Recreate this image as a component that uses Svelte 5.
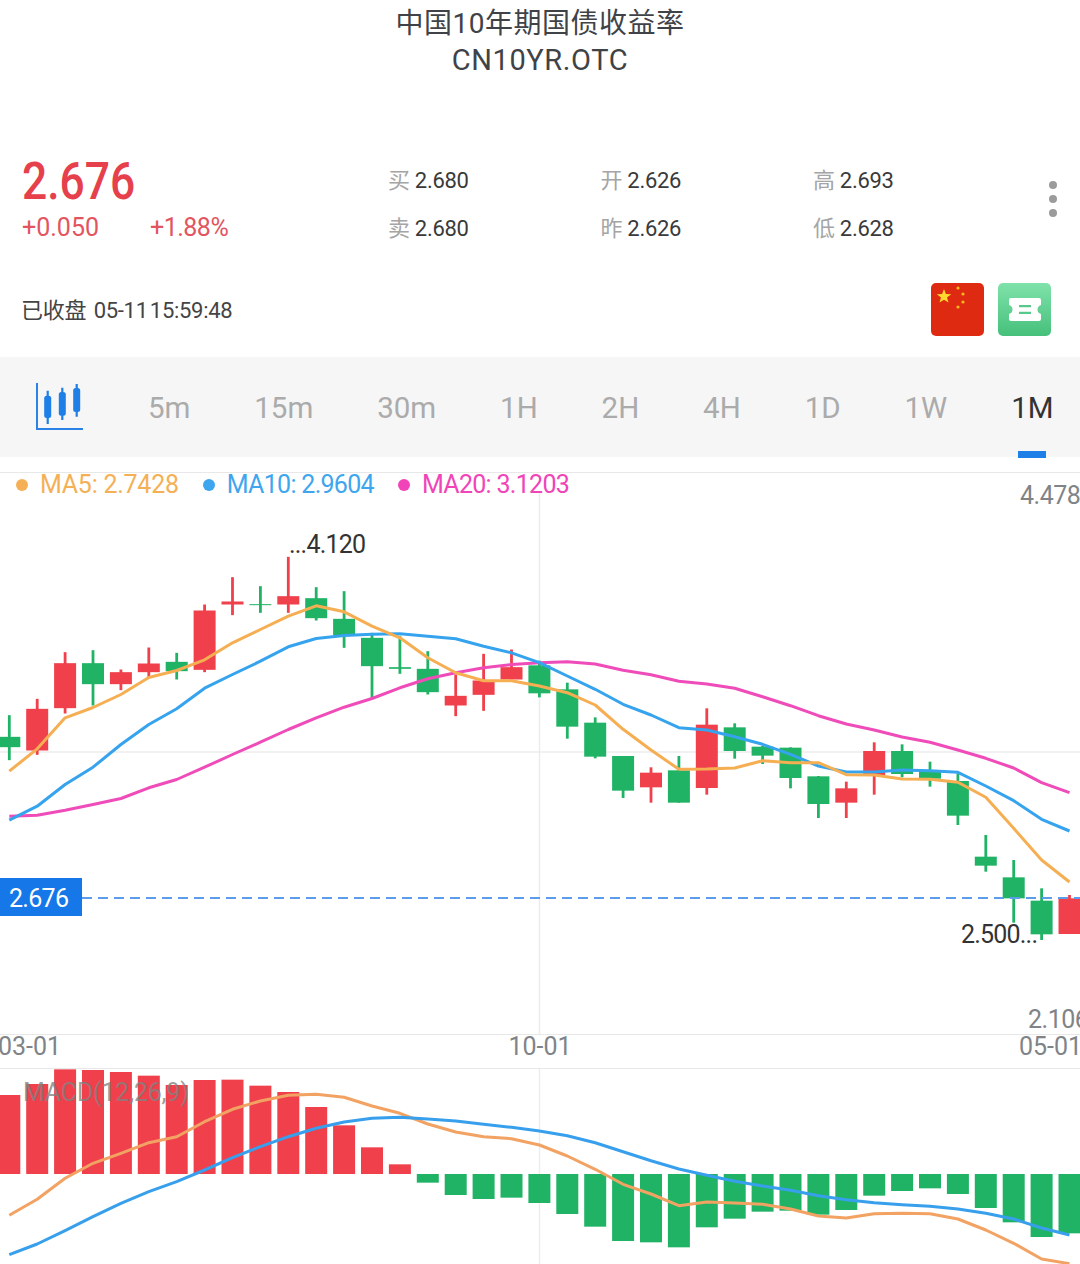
<script>
  const tabs = ['5m', '15m', '30m', '1H', '2H', '4H', '1D', '1W', '1M'];
  const active = '1M';

  const stats = [
    ['买', '2.680'], ['开', '2.626'], ['高', '2.693'],
    ['卖', '2.680'], ['昨', '2.626'], ['低', '2.628']
  ];

  const RED = '#ef404b';
  const GREEN = '#21b365';
  const step = 27.9;
  const xAt = (i) => 9.3 + step * i;

  // y values are in thirds of a pixel, measured from the top of each panel's crop
  // [wickTop, bodyTop, bodyBottom, wickBottom, isUp]
  const left = [
    [737, 802, 833, 872, 0], [688, 718, 843, 856, 1], [548, 581, 716, 732, 1], [542, 581, 644, 708, 0],
    [600, 608, 644, 662, 1], [534, 582, 608, 625, 1], [550, 577, 605, 630, 0], [405, 423, 601, 608, 1],
    [323, 396, 405, 437, 1], [350, 404, 407, 430, 0], [262, 380, 405, 430, 1], [353, 386, 446, 453, 0],
    [365, 448, 497, 535, 0], [490, 505, 590, 686, 0], [500, 593, 598, 613, 0], [545, 598, 668, 675, 0],
    [615, 679, 708, 740, 1], [553, 633, 676, 724, 1], [540, 593, 630, 630, 1]
  ];
  const right = [
    [62, 76, 160, 172, 0], [128, 148, 260, 296, 0], [232, 248, 350, 355, 0], [348, 348, 452, 474, 0],
    [382, 398, 442, 488, 1], [348, 391, 488, 488, 0], [205, 254, 444, 464, 1], [250, 262, 333, 356, 0],
    [318, 320, 347, 372, 0], [322, 323, 414, 445, 0], [408, 409, 492, 534, 0], [425, 445, 488, 534, 1],
    [307, 333, 405, 464, 1], [313, 333, 402, 412, 0], [365, 392, 416, 440, 0], [400, 423, 527, 555, 0],
    [585, 650, 677, 695, 0], [660, 712, 775, 848, 0], [745, 782, 883, 900, 0], [765, 775, 882, 882, 1]
  ];

  const toMainLeft = (v) => v / 3 - 3.5;
  const toMainRight = (v) => v / 3 + 167;

  const candles = [
    ...left.map((c) => [...c.slice(0, 4).map(toMainLeft), c[4]]),
    ...right.map((c) => [...c.slice(0, 4).map(toMainRight), c[4]])
  ].map(([wt, bt, bb, wb, up], i) => ({ x: xAt(i), wt, bt, bb, wb, color: up ? RED : GREEN }));

  function mainLine(a, b) {
    const ys = [...a.map(toMainLeft), ...b.map(toMainRight)];
    return ys.map((y, i) => `${xAt(i).toFixed(1)},${y.toFixed(1)}`).join(' ');
  }

  const ma5 = mainLine(
    [905, 838, 745, 714, 675, 624, 603, 571, 520, 480, 440, 409, 427, 470, 505, 565, 610, 634, 634],
    [138, 158, 195, 268, 330, 388, 387, 384, 362, 368, 368, 404, 405, 417, 418, 427, 472, 565, 660, 726]
  );
  const ma10 = mainLine(
    [1052, 1010, 945, 893, 825, 765, 718, 656, 615, 575, 532, 507, 498, 494, 493, 500, 508, 530, 550],
    [68, 108, 148, 193, 225, 263, 270, 290, 313, 343, 378, 396, 396, 390, 392, 397, 438, 482, 538, 573]
  );
  const ma20 = mainLine(
    [1040, 1037, 1022, 1005, 987, 955, 930, 893, 855, 818, 780, 745, 713, 687, 655, 628, 610, 595, 585],
    [68, 65, 72, 91, 104, 124, 132, 145, 170, 197, 227, 252, 270, 291, 307, 330, 355, 384, 428, 458]
  );

  // MACD panel starts at page y 1069, its crop at 1020
  const toMacd = (v) => v / 3 - 49;
  const zero = toMacd(462);

  const bars = [
    225, 192, 148, 150, 156, 167, 195, 180, 179, 197, 216, 261, 316, 382, 433, 488, 525, 537, 533, 549,
    582, 620, 663, 667, 682, 622, 596, 575, 572, 584, 570, 527, 513, 505, 522, 564, 607, 651, 640
  ].map((v, i) => {
    const y = toMacd(v);
    return {
      x: xAt(i) - 11,
      y: Math.min(y, zero),
      h: Math.abs(y - zero),
      color: y < zero ? RED : GREEN
    };
  });

  function macdLine(ys) {
    return ys.map((v, i) => `${xAt(i).toFixed(1)},${toMacd(v).toFixed(1)}`).join(' ');
  }

  const dif = macdLine([
    586, 538, 475, 430, 400, 368, 350, 305, 268, 243, 226, 223, 232, 258, 280, 312, 336, 350, 356, 375,
    408, 448, 493, 522, 557, 546, 549, 553, 567, 588, 594, 581, 580, 581, 597, 630, 670, 717, 731
  ]);
  const dea = macdLine([
    704, 672, 632, 590, 550, 515, 485, 450, 413, 380, 350, 325, 306, 295, 292, 297, 303, 313, 322, 333,
    347, 368, 395, 422, 447, 466, 484, 498, 511, 527, 539, 548, 554, 559, 567, 580, 597, 624, 645
  ]);
</script>

<div class="page">
  <header class="title">
    <div class="name">中国10年期国债收益率</div>
    <div class="code">CN10YR.OTC</div>
  </header>

  <section class="quote">
    <div class="price">
      <div class="last">2.676</div>
      <div class="change">
        <span>+0.050</span>
        <span class="pct">+1.88%</span>
      </div>
    </div>
    <div class="stats">
      {#each stats as [label, value]}
        <div class="stat"><span class="stat-label">{label}</span> {value}</div>
      {/each}
    </div>
    <div class="more" aria-hidden="true"><i></i><i></i><i></i></div>
  </section>

  <section class="status">
    <div class="status-text">已收盘 <span class="time">05-11 15:59:48</span></div>
    <svg class="badge" width="53" height="53" viewBox="0 0 53 53" aria-label="中国">
      <rect width="53" height="53" rx="5" fill="#de2a10" />
      <polygon fill="#ffd92e" points="13,6 14.9,11 20.2,11.2 16,14.5 17.5,19.6 13,16.7 8.5,19.6 10,14.5 5.8,11.2 11.1,11" />
      <circle cx="27" cy="5" r="1.6" fill="#fbb81c" />
      <circle cx="32" cy="11" r="1.6" fill="#fbb81c" />
      <circle cx="32" cy="19" r="1.6" fill="#fbb81c" />
      <circle cx="27" cy="24" r="1.6" fill="#fbb81c" />
    </svg>
    <svg class="badge" width="53" height="53" viewBox="0 0 53 53" aria-hidden="true">
      <defs>
        <linearGradient id="ticket" x1="0" y1="0" x2="0" y2="1">
          <stop offset="0" stop-color="#7fe2aa" />
          <stop offset="1" stop-color="#46c07b" />
        </linearGradient>
      </defs>
      <rect width="53" height="53" rx="5" fill="url(#ticket)" />
      <path fill="#fff" d="M13 15H41Q43 15 43 17V22Q39.5 23 39.5 26.5T43 31V36Q43 38 41 38H13Q11 38 11 36V31Q14.5 30 14.5 26.5T11 22V17Q11 15 13 15Z" />
      <path stroke="#57c98a" stroke-width="2.2" d="M21 23.2H33M21 29.8H33" />
    </svg>
  </section>

  <nav class="tabs">
    <svg class="tab-icon" width="48" height="48" viewBox="0 0 48 48" aria-hidden="true">
      <path d="M1 0V46H47" fill="none" stroke="#2a82e6" stroke-width="2" />
      <g stroke="#1e7fe6" stroke-width="2.2" fill="#1e7fe6">
        <path d="M11.7 7.7V41M26.3 4.7V37M40.7 1V33.7" />
      </g>
      <g fill="#1e7fe6">
        <rect x="8.2" y="12.7" width="7" height="22.3" rx="2.5" />
        <rect x="22.8" y="9" width="7" height="23.7" rx="2.5" />
        <rect x="37.2" y="5" width="7" height="24" rx="2.5" />
      </g>
    </svg>
    {#each tabs as tab}
      <div class="tab" class:on={tab === active}>{tab}</div>
    {/each}
  </nav>

  <section class="main-chart">
    <svg width="1080" height="561" viewBox="0 0 1080 561">
      <line x1="539.5" y1="20" x2="539.5" y2="561" stroke="#ececec" stroke-width="1.5" />
      <line x1="0" y1="279" x2="1080" y2="279" stroke="#ececec" stroke-width="1.5" />
      {#each candles as c}
        <line x1={c.x} y1={c.wt} x2={c.x} y2={c.wb} stroke={c.color} stroke-width="2.8" />
        <rect x={c.x - 11} y={c.bt} width="22" height={c.bb - c.bt} fill={c.color} />
      {/each}
      <polyline points={ma20} fill="none" stroke="#ef4cba" stroke-width="3" stroke-linejoin="round" />
      <polyline points={ma10} fill="none" stroke="#36a3ee" stroke-width="3" stroke-linejoin="round" />
      <polyline points={ma5} fill="none" stroke="#f6ae52" stroke-width="3" stroke-linejoin="round" />
      <line x1="82" y1="425" x2="1080" y2="425" stroke="#5b9dea" stroke-width="2" stroke-dasharray="10 6" />
    </svg>

    <div class="legend">
      <span class="ma5"><i></i>MA5: 2.7428</span>
      <span class="ma10"><i></i>MA10: 2.9604</span>
      <span class="ma20"><i></i>MA20: 3.1203</span>
    </div>
    <div class="scale top">4.478</div>
    <div class="scale bottom">2.106</div>
    <div class="mark high">...4.120</div>
    <div class="mark low">2.500...</div>
    <div class="now">2.676</div>
  </section>

  <div class="axis">
    <span>03-01</span>
    <span>10-01</span>
    <span>05-01</span>
  </div>

  <section class="macd">
    <svg width="1080" height="195" viewBox="0 0 1080 195">
      <line x1="539.5" y1="0" x2="539.5" y2="195" stroke="#ececec" stroke-width="1.5" />
      {#each bars as b}
        <rect x={b.x} y={b.y} width="22" height={b.h} fill={b.color} />
      {/each}
      <polyline points={dif} fill="none" stroke="#f2a262" stroke-width="3" stroke-linejoin="round" />
      <polyline points={dea} fill="none" stroke="#379fec" stroke-width="3" stroke-linejoin="round" />
    </svg>
    <div class="macd-label">MACD(12,26,9)</div>
  </section>
</div>

<style>
  :global(body) {
    background: #fff;
  }

  .page {
    width: 1080px;
    height: 1264px;
    overflow: hidden;
    font-family: Roboto, "Noto Sans CJK SC", sans-serif;
    color: #333;
  }

  .title {
    height: 156px;
    padding-top: 5px;
    box-sizing: border-box;
    text-align: center;
    font-size: 28px;
    line-height: 37px;
    color: #3f4347;
  }

  .name {
    letter-spacing: 0.5px;
  }

  .code {
    font-size: 29px;
    letter-spacing: 0.6px;
  }

  .quote {
    display: flex;
    height: 92px;
    padding-left: 22px;
    position: relative;
  }

  .price {
    width: 366px;
  }

  .last {
    font-size: 51px;
    font-weight: 500;
    line-height: 50px;
    padding-top: 1px;
    color: #e5404b;
    transform: scaleX(0.87);
    transform-origin: left center;
  }

  .change {
    display: flex;
    gap: 51px;
    margin-top: 1px;
    font-size: 25px;
    line-height: 40px;
    color: #e25560;
  }

  .pct {
    letter-spacing: -0.5px;
  }

  .stats {
    display: grid;
    grid-template-columns: repeat(3, 212.5px);
    grid-auto-rows: 48px;
    font-size: 22px;
    line-height: 48px;
    letter-spacing: -0.3px;
    padding-top: 1px;
    color: #3a3a3a;
    height: 96px;
  }

  .stat-label {
    color: #a5a5a5;
  }

  .more {
    position: absolute;
    right: 23px;
    top: 25px;
    display: flex;
    flex-direction: column;
    gap: 6px;
  }

  .more i {
    width: 8px;
    height: 8px;
    border-radius: 50%;
    background: #9b9b9b;
  }

  .status {
    display: flex;
    align-items: center;
    gap: 14px;
    height: 53px;
    margin-top: 35px;
    padding: 0 29px 0 21px;
  }

  .status-text {
    margin-right: auto;
    padding-bottom: 4px;
    font-size: 22px;
    letter-spacing: -0.2px;
    color: #444;
  }

  .time {
    margin-left: 2px;
    word-spacing: -3px;
    letter-spacing: -0.3px;
  }

  .badge {
    display: block;
  }

  .tabs {
    position: relative;
    display: flex;
    align-items: center;
    gap: 63.9px;
    height: 100px;
    margin-top: 21px;
    padding-left: 36px;
    background: #f6f6f6;
  }

  .tab {
    position: relative;
    top: 1px;
    font-size: 29.5px;
    color: #ababab;
  }

  .tab.on {
    color: #333;
  }

  .tab.on::after {
    content: '';
    position: absolute;
    left: 7px;
    right: 7px;
    bottom: -33px;
    height: 7px;
    background: #1e7fe6;
  }

  .main-chart {
    position: relative;
    height: 561px;
    margin-top: 15px;
    border-top: 1px solid #e8e8e8;
  }

  .main-chart svg,
  .macd svg {
    display: block;
  }

  .legend {
    position: absolute;
    left: 16px;
    top: -2px;
    display: flex;
    gap: 24px;
    font-size: 25px;
    line-height: 28px;
    letter-spacing: -0.7px;
  }

  .legend i {
    display: inline-block;
    width: 12px;
    height: 12px;
    margin-right: 12px;
    border-radius: 50%;
    background: currentColor;
    vertical-align: 2px;
  }

  .ma5 {
    color: #f5b056;
    letter-spacing: -0.25px;
  }

  .ma10 {
    color: #3ea6ee;
  }

  .ma20 {
    color: #f044b8;
  }

  .scale {
    position: absolute;
    left: 1020px;
    font-size: 25px;
    line-height: 28px;
    letter-spacing: -0.5px;
    color: #808488;
    white-space: nowrap;
  }

  .scale.top {
    top: 9px;
  }

  .scale.bottom {
    left: 1028px;
    top: 533px;
  }

  .mark {
    position: absolute;
    font-size: 25px;
    line-height: 28px;
    letter-spacing: -0.8px;
    color: #333;
  }

  .mark.high {
    left: 289px;
    top: 58px;
  }

  .mark.low {
    left: 961px;
    top: 448px;
  }

  .now {
    position: absolute;
    left: 0;
    top: 405px;
    width: 82px;
    height: 38px;
    box-sizing: border-box;
    padding-left: 9px;
    font-size: 25px;
    line-height: 42px;
    letter-spacing: -0.7px;
    color: #fff;
    background: #1677e8;
  }

  .axis {
    display: flex;
    justify-content: space-between;
    height: 35px;
    margin: 0 -2px;
    border-top: 1px solid #e8e8e8;
    border-bottom: 1px solid #e8e8e8;
    box-sizing: border-box;
    font-size: 25px;
    line-height: 24px;
    color: #808488;
  }

  .macd {
    position: relative;
    height: 195px;
  }

  .macd-label {
    position: absolute;
    left: 23px;
    top: 10px;
    font-size: 25px;
    line-height: 28px;
    letter-spacing: -0.2px;
    color: rgba(130, 130, 130, 0.8);
  }
</style>
